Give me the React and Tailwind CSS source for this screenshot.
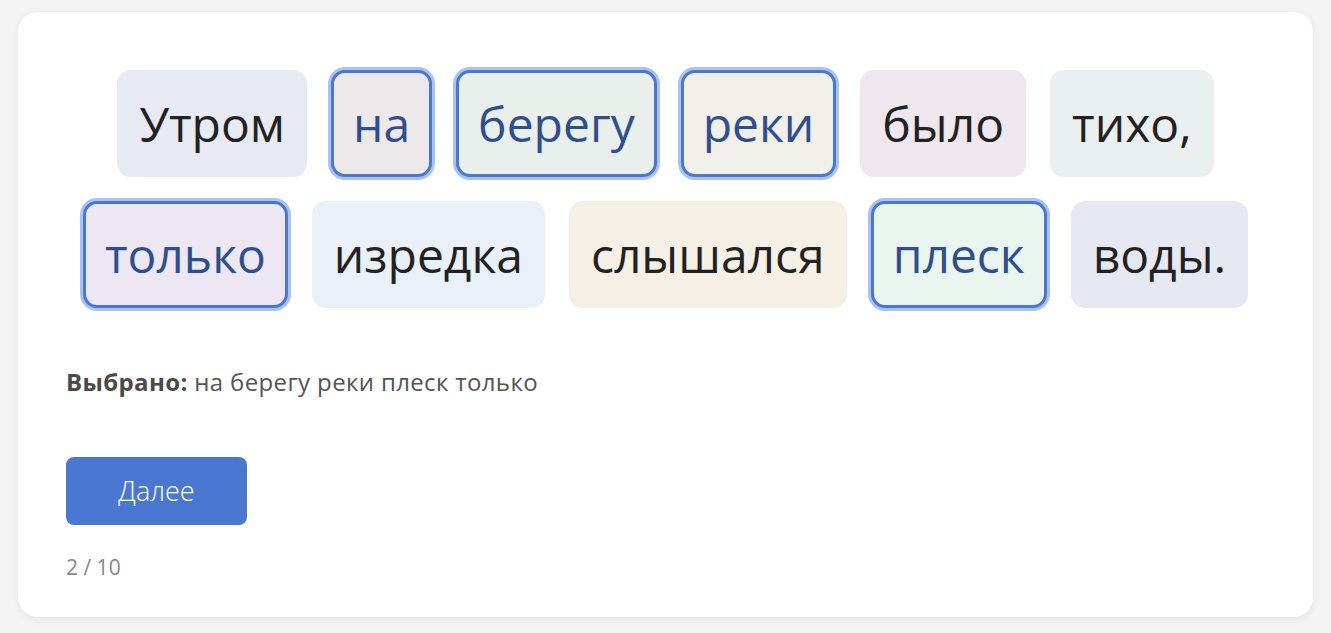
const words = [
  { text: 'Утром', bg: 'bg-[#e7eaf2]', selected: false },
  { text: 'на', bg: 'bg-[#ede8ea]', selected: true },
  { text: 'берегу', bg: 'bg-[#e9efea]', selected: true },
  { text: 'реки', bg: 'bg-[#f0efe8]', selected: true },
  { text: 'было', bg: 'bg-[#eee7ee]', selected: false },
  { text: 'тихо,', bg: 'bg-[#eaf0f0]', selected: false },
  { text: 'только', bg: 'bg-[#ece7f2]', selected: true },
  { text: 'изредка', bg: 'bg-[#e9f0f7]', selected: false },
  { text: 'слышался', bg: 'bg-[#f4f0e6]', selected: false },
  { text: 'плеск', bg: 'bg-[#ebf5f0]', selected: true },
  { text: 'воды.', bg: 'bg-[#e6e9f2]', selected: false },
];

function Chip({ word }) {
  return (
    <button
      className={`h-[107px] px-[19px] flex items-center rounded-[14px] border-[3px] text-[48px] leading-none ${word.bg} ${
        word.selected
          ? 'border-[#4a78d0] text-[#2f4e90] ring-[3px] ring-[#aac2f0]'
          : 'border-transparent text-[#222]'
      }`}
    >
      {word.text}
    </button>
  );
}

export default function App() {
  return (
    <div className="min-h-screen bg-[#f3f3f3] pt-[12px] px-[18px] pb-[16px]" style={{ fontFamily: '"Open Sans", "Noto Sans", sans-serif' }}>
      <div className="bg-white rounded-[20px] shadow-[0_2px_10px_rgba(0,0,0,0.06)] h-[605px] px-[48px] pt-[58px]">
        <div className="flex flex-wrap justify-center gap-x-[24px] gap-y-[24px]">
          {words.map((w) => (
            <Chip key={w.text} word={w} />
          ))}
        </div>

        <p className="mt-[58px] text-[24px] leading-[32px] tracking-[0.015em] text-[#555]">
          <span className="font-bold text-[#4a4a4a]">Выбрано:</span> на берегу реки плеск только
        </p>

        <button className="mt-[59px] w-[181px] h-[68px] rounded-[8px] bg-[#4a78d0] text-white text-[27px] font-light">
          Далее
        </button>

        <div className="mt-[27px] text-[21px] leading-[30px] text-[#888]">2 / 10</div>
      </div>
    </div>
  );
}
